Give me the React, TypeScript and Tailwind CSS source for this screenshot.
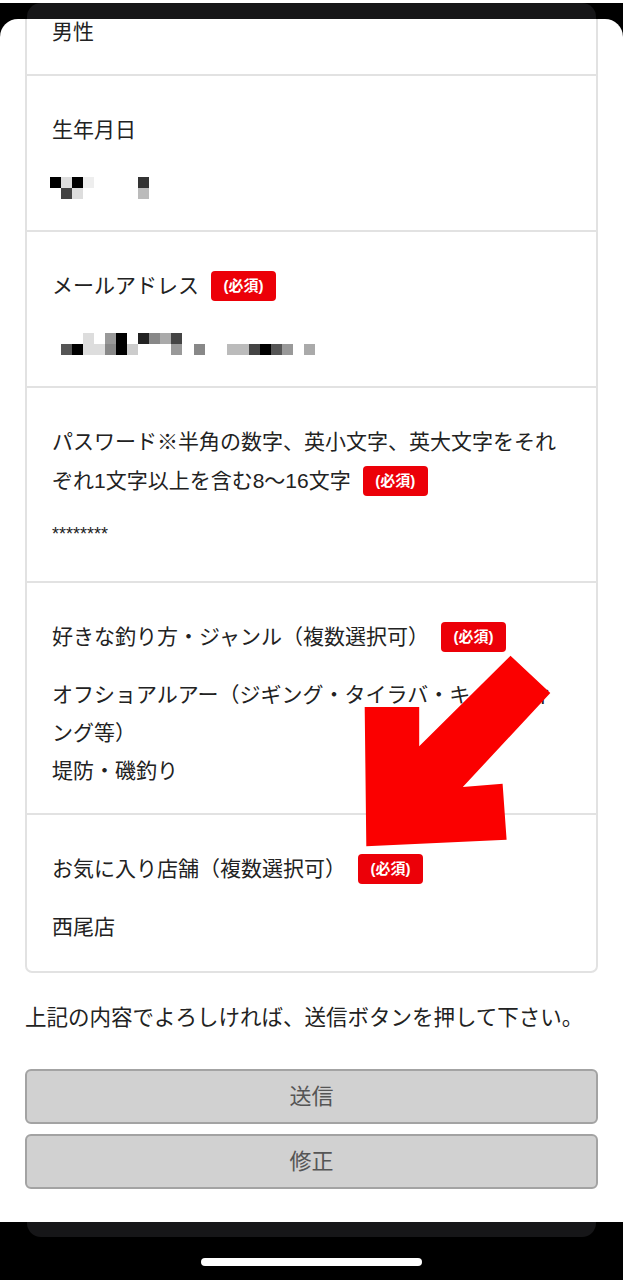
import React from 'react'

const font = "font-['Liberation_Sans','Noto_Sans_CJK_JP',sans-serif]"

function Badge() {
  return (
    <span className="ml-[12px] inline-block h-[30px] w-[65px] rounded-[4px] bg-[#ec0008] text-center align-middle text-[15px] font-bold leading-[30px] text-white relative -top-[1px]">
      (必須)
    </span>
  )
}

// mosaic blocks that hide personal data
type Px = [number, number, number, string]

const birthPx: Px[] = [
  [0, 0, 11, '#000'], [11, 0, 11, '#ddd'], [22, 0, 11, '#000'], [33, 0, 11, '#eee'],
  [11, 11, 11, '#444'], [22, 11, 11, '#ddd'],
  [88, 0, 11, '#333'], [88, 11, 11, '#bbb'],
]

const mailPx: Px[] = [
  [33, 0, 11, '#ddd'], [55, 0, 11, '#999'], [66, 0, 11, '#000'], [88, 0, 11, '#222'],
  [99, 0, 11, '#888'], [110, 0, 11, '#aaa'], [121, 0, 11, '#444'],
  [11, 11, 11, '#555'], [22, 11, 11, '#000'], [33, 11, 22, '#ddd'], [55, 11, 11, '#888'],
  [66, 11, 11, '#000'], [77, 11, 11, '#ccc'], [121, 11, 11, '#999'], [144, 11, 11, '#888'],
  [177, 11, 22, '#bbb'], [199, 11, 11, '#444'], [210, 11, 11, '#000'], [221, 11, 11, '#555'],
  [232, 11, 11, '#999'], [254, 11, 11, '#aaa'],
]

function Mosaic({ px }: { px: Px[] }) {
  return (
    <div className="flex h-[38px] items-center -ml-[2px]">
      <svg width="270" height="22" viewBox="0 0 270 22">
        {px.map(([x, y, w, c], i) => (
          <rect key={i} x={x} y={y} width={w} height={11} fill={c} />
        ))}
      </svg>
    </div>
  )
}

function Row({ label, required, children, last }: { label: string; required?: boolean; children: React.ReactNode; last?: boolean }) {
  return (
    <div className={`px-[25px] pt-[34px] ${last ? 'pb-[25px]' : 'pb-[23px] border-b-2 border-[#e2e2e2]'}`}>
      <div className="text-[21px] leading-[39px]">
        {label}
        {required && <Badge />}
      </div>
      <div className="mt-[20px] text-[21px] leading-[38px]">{children}</div>
    </div>
  )
}

export default function App() {
  return (
    <div className={`relative min-h-screen bg-black text-[#222] ${font}`}>
      <div className="mx-[27px] mt-[3px] h-[16px] rounded-t-[14px] bg-[#161618]" />

      <div className="h-[1203px] overflow-hidden rounded-t-[18px] bg-white px-[25px]">
        {/* Form summary */}
        <div className="-mt-[101px] rounded-b-[7px] border-2 border-[#e2e2e2]">
          <Row label="性別">
            <div>男性</div>
          </Row>
          <Row label="生年月日">
            <Mosaic px={birthPx} />
          </Row>
          <Row label="メールアドレス" required>
            <Mosaic px={mailPx} />
          </Row>
          <Row label="パスワード※半角の数字、英小文字、英大文字をそれぞれ1文字以上を含む8〜16文字" required>
            <div className="relative -top-[5px] text-[18px]">********</div>
          </Row>
          <Row label="好きな釣り方・ジャンル（複数選択可）" required>
            <div>オフショアルアー（ジギング・タイラバ・キャスティング等）</div>
            <div>堤防・磯釣り</div>
          </Row>
          <Row label="お気に入り店舗（複数選択可）" required last>
            <div>西尾店</div>
          </Row>
        </div>

        <p className="mt-[26px] text-[21.5px] leading-[39px]">上記の内容でよろしければ、送信ボタンを押して下さい。</p>

        <div className="mt-[31px] flex flex-col gap-[10px]">
          <button className="h-[55px] w-full rounded-[6px] border-2 border-[#a3a3a3] bg-[#d1d1d1] text-[22px] text-[#555]">送信</button>
          <button className="h-[55px] w-full rounded-[6px] border-2 border-[#a3a3a3] bg-[#d1d1d1] text-[22px] text-[#555]">修正</button>
        </div>
      </div>

      <div className="mx-[27px] h-[15px] rounded-b-[14px] bg-[#161618]" />
      <div className="mt-[21px] flex justify-center">
        <div className="h-[8px] w-[221px] rounded-full bg-white" />
      </div>

      {/* red annotation arrow */}
      <svg className="pointer-events-none absolute left-0 top-0" width="623" height="1280" viewBox="0 0 623 1280">
        <polygon
          points="510.5,652.7 550.3,690 462.8,784 502.6,780.7 506.6,836.7 366.3,843.3 364.7,704 419.2,704 419.2,743.3"
          fill="#fb0000"
        />
      </svg>
    </div>
  )
}
